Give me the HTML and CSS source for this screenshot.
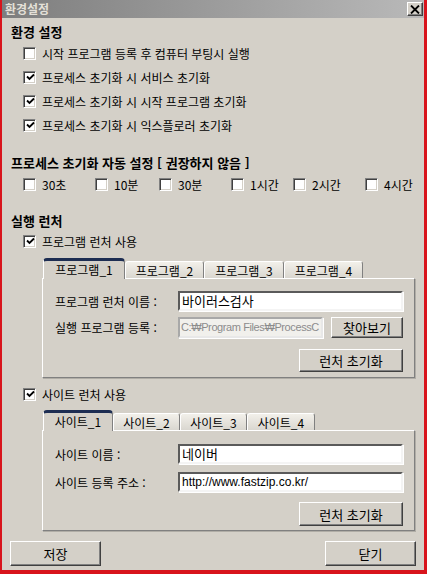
FILE: index.html
```html
<!DOCTYPE html>
<html lang="ko">

<head>
    <meta charset="UTF-8">
    <meta name="viewport" content="width=device-width, initial-scale=1.0">
    <title>환경설정</title>
    <link rel="stylesheet" href="styles.css">
</head>

<body>
    <div class="window">
        <div class="titlebar">
            <span class="title">환경설정</span>
            <span class="close">
                <svg width="10" height="9" viewBox="0 0 10 9">
                    <path d="M1 0.5 L9 8.5 M9 0.5 L1 8.5" stroke="#000" stroke-width="1.8" fill="none" />
                </svg>
            </span>
        </div>

        <div class="content">
            <div class="group-title">환경 설정</div>
            <div class="check-row"><span class="box"></span>시작 프로그램 등록 후 컴퓨터 부팅시 실행</div>
            <div class="check-row"><span class="box checked"><svg width="9" height="9" viewBox="0 0 9 9"><path d="M1 3.5 L3.5 6 L8 1.5" stroke="#000" stroke-width="1.8" fill="none" /></svg></span>프로세스 초기화 시 서비스 초기화</div>
            <div class="check-row"><span class="box checked"><svg width="9" height="9" viewBox="0 0 9 9"><path d="M1 3.5 L3.5 6 L8 1.5" stroke="#000" stroke-width="1.8" fill="none" /></svg></span>프로세스 초기화 시 시작 프로그램 초기화</div>
            <div class="check-row"><span class="box checked"><svg width="9" height="9" viewBox="0 0 9 9"><path d="M1 3.5 L3.5 6 L8 1.5" stroke="#000" stroke-width="1.8" fill="none" /></svg></span>프로세스 초기화 시 익스플로러 초기화</div>

            <div class="group-title second">프로세스 초기화 자동 설정 [ 권장하지 않음 ]</div>
            <div class="timer-row">
                <div class="timer"><span class="box"></span>30초</div>
                <div class="timer"><span class="box"></span>10분</div>
                <div class="timer"><span class="box"></span>30분</div>
                <div class="timer"><span class="box"></span>1시간</div>
                <div class="timer"><span class="box"></span>2시간</div>
                <div class="timer"><span class="box"></span>4시간</div>
            </div>

            <div class="group-title third">실행 런처</div>
            <div class="check-row launcher"><span class="box checked"><svg width="9" height="9" viewBox="0 0 9 9"><path d="M1 3.5 L3.5 6 L8 1.5" stroke="#000" stroke-width="1.8" fill="none" /></svg></span>프로그램 런처 사용</div>

            <div class="tabs prog-tabs">
                <div class="tab-strip">
                    <span class="tab active w82">프로그램_1</span>
                    <span class="tab w79">프로그램_2</span>
                    <span class="tab w80">프로그램_3</span>
                    <span class="tab w79">프로그램_4</span>
                </div>
                <div class="tab-panel prog-panel">
                    <div class="field">
                        <span class="field-label">프로그램 런처 이름 :</span>
                        <span class="input">바이러스검사</span>
                    </div>
                    <div class="field second-field">
                        <span class="field-label">실행 프로그램 등록 :</span>
                        <span class="input disabled">C:₩Program Files₩ProcessC</span>
                        <span class="btn browse">찾아보기</span>
                    </div>
                    <div class="btn-row">
                        <span class="btn reset">런처 초기화</span>
                    </div>
                </div>
            </div>

            <div class="check-row launcher site-check"><span class="box checked"><svg width="9" height="9" viewBox="0 0 9 9"><path d="M1 3.5 L3.5 6 L8 1.5" stroke="#000" stroke-width="1.8" fill="none" /></svg></span>사이트 런처 사용</div>

            <div class="tabs site-tabs">
                <div class="tab-strip">
                    <span class="tab active w70">사이트_1</span>
                    <span class="tab w67">사이트_2</span>
                    <span class="tab w67">사이트_3</span>
                    <span class="tab w68">사이트_4</span>
                </div>
                <div class="tab-panel site-panel">
                    <div class="field">
                        <span class="field-label">사이트 이름 :</span>
                        <span class="input">네이버</span>
                    </div>
                    <div class="field site-second">
                        <span class="field-label">사이트 등록 주소 :</span>
                        <span class="input url">http://www.fastzip.co.kr/</span>
                    </div>
                    <div class="btn-row site-btn-row">
                        <span class="btn reset tall">런처 초기화</span>
                    </div>
                </div>
            </div>

            <div class="footer">
                <span class="btn foot-btn">저장</span>
                <span class="btn foot-btn">닫기</span>
            </div>
        </div>
    </div>
</body>

</html>
```

FILE: styles.css
```css
* {
    margin: 0;
    padding: 0;
    box-sizing: border-box;
}

body {
    background-color: #d4d0c8;
    font-family: "Noto Sans CJK KR", "DejaVu Sans", sans-serif;
    font-size: 12px;
    color: #000;
}

.window {
    width: 427px;
    height: 574px;
    border-left: 2px solid #d8141c;
    border-right: 3px solid #d8141c;
    border-bottom: 4px solid #d8141c;
    background-color: #d4d0c8;
    display: flex;
    flex-direction: column;
}

.titlebar {
    height: 18px;
    background: linear-gradient(to right, #7e7e7e, #b9b9b9);
    display: flex;
    align-items: center;
    justify-content: space-between;
    padding: 0 1px 0 3px;
}

.titlebar .title {
    color: #e4e0d8;
    font-weight: bold;
    font-size: 12px;
    line-height: 18px;
}

.titlebar .close {
    width: 16px;
    height: 14px;
    background-color: #d4d0c8;
    border: 1px solid;
    border-color: #fff #404040 #404040 #fff;
    box-shadow: inset -1px -1px 0 #808080;
    display: flex;
    align-items: center;
    justify-content: center;
}

.content {
    flex: 1;
    padding: 5px 9px 0 9px;
    display: flex;
    flex-direction: column;
}

.group-title {
    height: 18px;
    line-height: 18px;
    font-size: 13px;
    font-weight: bold;
}

.group-title.second {
    margin-top: 17px;
}

.group-title.third {
    margin-top: 16px;
}

.check-row {
    height: 24px;
    display: flex;
    align-items: center;
    padding-left: 12px;
    white-space: nowrap;
}

.check-row.launcher {
    height: 22px;
}

.check-row.site-check {
    margin-top: 5px;
}

.box {
    width: 13px;
    height: 13px;
    margin-right: 6px;
    flex-shrink: 0;
    background-color: #fff;
    border: 1px solid;
    border-color: #808080 #fff #fff #808080;
    box-shadow: inset 1px 1px 0 #404040, inset -1px -1px 0 #d4d0c8;
    display: flex;
    align-items: center;
    justify-content: center;
}

.box svg {
    margin: 1px 0 0 1px;
}

.timer-row {
    height: 24px;
    display: grid;
    grid-template-columns: 72px 64px 72px 62px 72px auto;
    align-items: center;
    padding-left: 12px;
}

.timer {
    display: flex;
    align-items: center;
    white-space: nowrap;
}

.tabs {
    margin-left: 31px;
}

.prog-tabs {
    margin-top: 7px;
}

.site-tabs {
    margin-top: 6px;
}

.tab-strip {
    height: 20px;
    display: flex;
    align-items: flex-end;
    padding-left: 1px;
}

.tab {
    height: 18px;
    line-height: 17px;
    text-align: center;
    white-space: nowrap;
    background: linear-gradient(#f2f0ea, #d8d5ce);
    border: 1px solid #a8a59e;
    border-top-color: #fff;
    border-left-color: #fff;
    border-right-color: #808080;
    border-bottom: none;
    border-radius: 3px 3px 0 0;
}

.tab.active {
    height: 21px;
    line-height: 18px;
    background: #d4d0c8;
    border-top: 3px solid #1d2d52;
    border-radius: 4px 4px 0 0;
    position: relative;
    z-index: 1;
}

.w82 { width: 82px; }
.w80 { width: 80px; }
.w79 { width: 79px; }
.w70 { width: 70px; }
.w68 { width: 68px; }
.w67 { width: 67px; }

.tab-panel {
    margin-top: -1px;
    position: relative;
    z-index: 0;
    border: 1px solid;
    border-color: #fff #808080 #808080 #fff;
    box-shadow: 1px 1px 0 #b0ada6;
}

.prog-panel {
    padding: 12px 11px 5px 12px;
}

.site-panel {
    padding: 13px 11px 4px 12px;
}

.field {
    height: 20px;
    display: flex;
    align-items: center;
}

.field.second-field {
    height: 21px;
    margin-top: 6px;
}

.field.site-second {
    margin-top: 8px;
}

.field-label {
    width: 123px;
    flex-shrink: 0;
    white-space: nowrap;
}

.input {
    flex: 1;
    min-width: 0;
    height: 100%;
    background-color: #fff;
    border: 2px solid;
    border-color: #5a5a5a #f4f4f4 #f4f4f4 #5a5a5a;
    box-shadow: 1px 1px 0 #fff;
    padding-left: 2px;
    font-size: 13px;
    line-height: 16px;
    white-space: nowrap;
    overflow: hidden;
}

.input.url {
    font-family: "Liberation Sans", sans-serif;
    font-size: 12px;
}

.input.disabled {
    background-color: #f1f0ec;
    color: #8c8c8c;
    border-color: #a8a8a8 #e8e8e8 #e8e8e8 #a8a8a8;
    font-family: "Liberation Sans", "Noto Sans CJK KR", sans-serif;
    font-size: 11px;
    letter-spacing: -0.4px;
    padding-left: 1px;
}

.btn {
    display: flex;
    align-items: center;
    justify-content: center;
    background-color: #d4d0c8;
    border: 1px solid;
    border-color: #fff #404040 #404040 #fff;
    box-shadow: inset -1px -1px 0 #808080;
    font-size: 13px;
    white-space: nowrap;
}

.btn.browse {
    width: 72px;
    height: 21px;
    margin-left: 8px;
}

.btn-row {
    display: flex;
    justify-content: flex-end;
    margin-top: 11px;
}

.site-btn-row {
    margin-top: 10px;
}

.btn.reset {
    width: 104px;
    height: 23px;
}

.btn.reset.tall {
    height: 24px;
}

.footer {
    margin: 10px -1px 0 -1px;
    display: flex;
    justify-content: space-between;
}

.btn.foot-btn {
    width: 91px;
    height: 25px;
}
```
